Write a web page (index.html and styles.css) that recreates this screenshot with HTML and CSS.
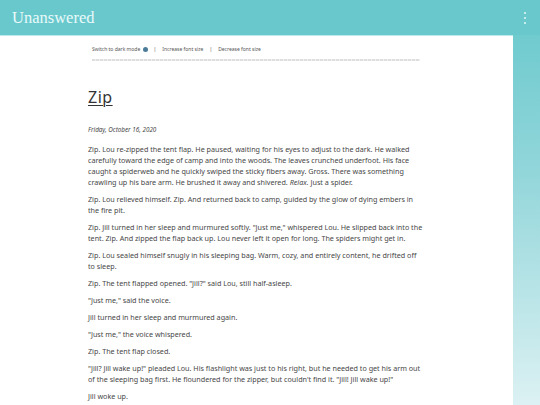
FILE: index.html
```html
<!DOCTYPE html>
<html>
<head>
<meta charset="utf-8">
<link rel="stylesheet" href="styles.css">
</head>
<body>
<header class="topbar">
  <span class="brand">Unanswered</span>
  <span class="kebab"><i></i><i></i><i></i></span>
</header>
<main class="panel">
  <div class="column">
    <nav class="tools">
      <span>Switch to dark mode <b class="dot"></b></span>
      <span class="sep">|</span>
      <span>Increase font size</span>
      <span class="sep">|</span>
      <span>Decrease font size</span>
    </nav>
    <div class="rule"></div>
    <article class="post">
      <h1 class="title">Zip</h1>
      <p class="date">Friday, October 16, 2020</p>
      <p>Zip. Lou re-zipped the tent flap. He paused, waiting for his eyes to adjust to the dark. He walked carefully toward the edge of camp and into the woods. The leaves crunched underfoot. His face caught a spiderweb and he quickly swiped the sticky fibers away. Gross. There was something crawling up his bare arm. He brushed it away and shivered. <em>Relax.</em> Just a spider.</p>
      <p>Zip. Lou relieved himself. Zip. And returned back to camp, guided by the glow of dying embers in the fire pit.</p>
      <p>Zip. Jill turned in her sleep and murmured softly. "Just me," whispered Lou. He slipped back into the tent. Zip. And zipped the flap back up. Lou never left it open for long. The spiders might get in.</p>
      <p>Zip. Lou sealed himself snugly in his sleeping bag. Warm, cozy, and entirely content, he drifted off to sleep.</p>
      <p>Zip. The tent flapped opened. "Jill?" said Lou, still half-asleep.</p>
      <p>"Just me," said the voice.</p>
      <p>Jill turned in her sleep and murmured again.</p>
      <p>"Just me," the voice whispered.</p>
      <p>Zip. The tent flap closed.</p>
      <p>"Jill? Jill wake up!" pleaded Lou. His flashlight was just to his right, but he needed to get his arm out of the sleeping bag first. He floundered for the zipper, but couldn't find it. "Jill! Jill wake up!"</p>
      <p>Jill woke up.</p>
    </article>
  </div>
</main>
</body>
</html>
```
FILE: styles.css
```css
html, body {
  margin: 0;
  padding: 0;
  height: 100%;
}
body {
  background: linear-gradient(to bottom, #67c8cc 0%, #8fd5d9 40%, #dcf1f3 100%);
  font-family: "Noto Sans", "DejaVu Sans", sans-serif;
  color: #474747;
  overflow: hidden;
}
.topbar {
  height: 35px;
  background: #68c8cc;
  display: flex;
  align-items: center;
  justify-content: space-between;
  padding: 0 14px 0 12px;
  box-sizing: border-box;
}
.brand {
  font-family: "Liberation Serif", "DejaVu Serif", serif;
  font-size: 16.5px;
  color: #eafafa;
}
.kebab {
  display: flex;
  flex-direction: column;
  gap: 3px;
  margin-top: 1px;
}
.kebab i {
  width: 2px;
  height: 2px;
  border-radius: 50%;
  background: #e6f7f8;
  display: block;
}
.panel {
  width: 513px;
  background: #fff;
  border-top: 1px solid #bfe9eb;
  min-height: 400px;
}
.column {
  margin-left: 88px;
  width: 337px;
  padding-top: 9px;
}
.tools {
  display: flex;
  align-items: center;
  gap: 4px;
  padding-left: 4px;
  font-size: 5px;
  color: #555;
  height: 8px;
}
.dot {
  display: inline-block;
  width: 5px;
  height: 5px;
  border-radius: 50%;
  background: #4a7c9a;
  vertical-align: -1px;
  margin-left: 1px;
}
.sep {
  padding: 0 2px;
}
.rule {
  margin: 6px 0 0 4px;
  width: 328px;
  height: 2px;
  background: repeating-linear-gradient(to right, #dedede 0 3px, #f0f0f0 3px 4px);
}
.post {
  padding-top: 26px;
}
.title {
  font-size: 16px;
  font-weight: 400;
  margin: 0;
  color: #333;
  text-decoration: underline;
  text-decoration-thickness: 1px;
  text-underline-offset: 2px;
  line-height: 20px;
  letter-spacing: 0.5px;
}
.post p {
  font-size: 7.2px;
  line-height: 11px;
  margin: 0 0 6px;
  font-variant-ligatures: none;
}
.post p.date {
  font-style: italic;
  font-size: 6.3px;
  margin: 17px 0 9px;
}
```
